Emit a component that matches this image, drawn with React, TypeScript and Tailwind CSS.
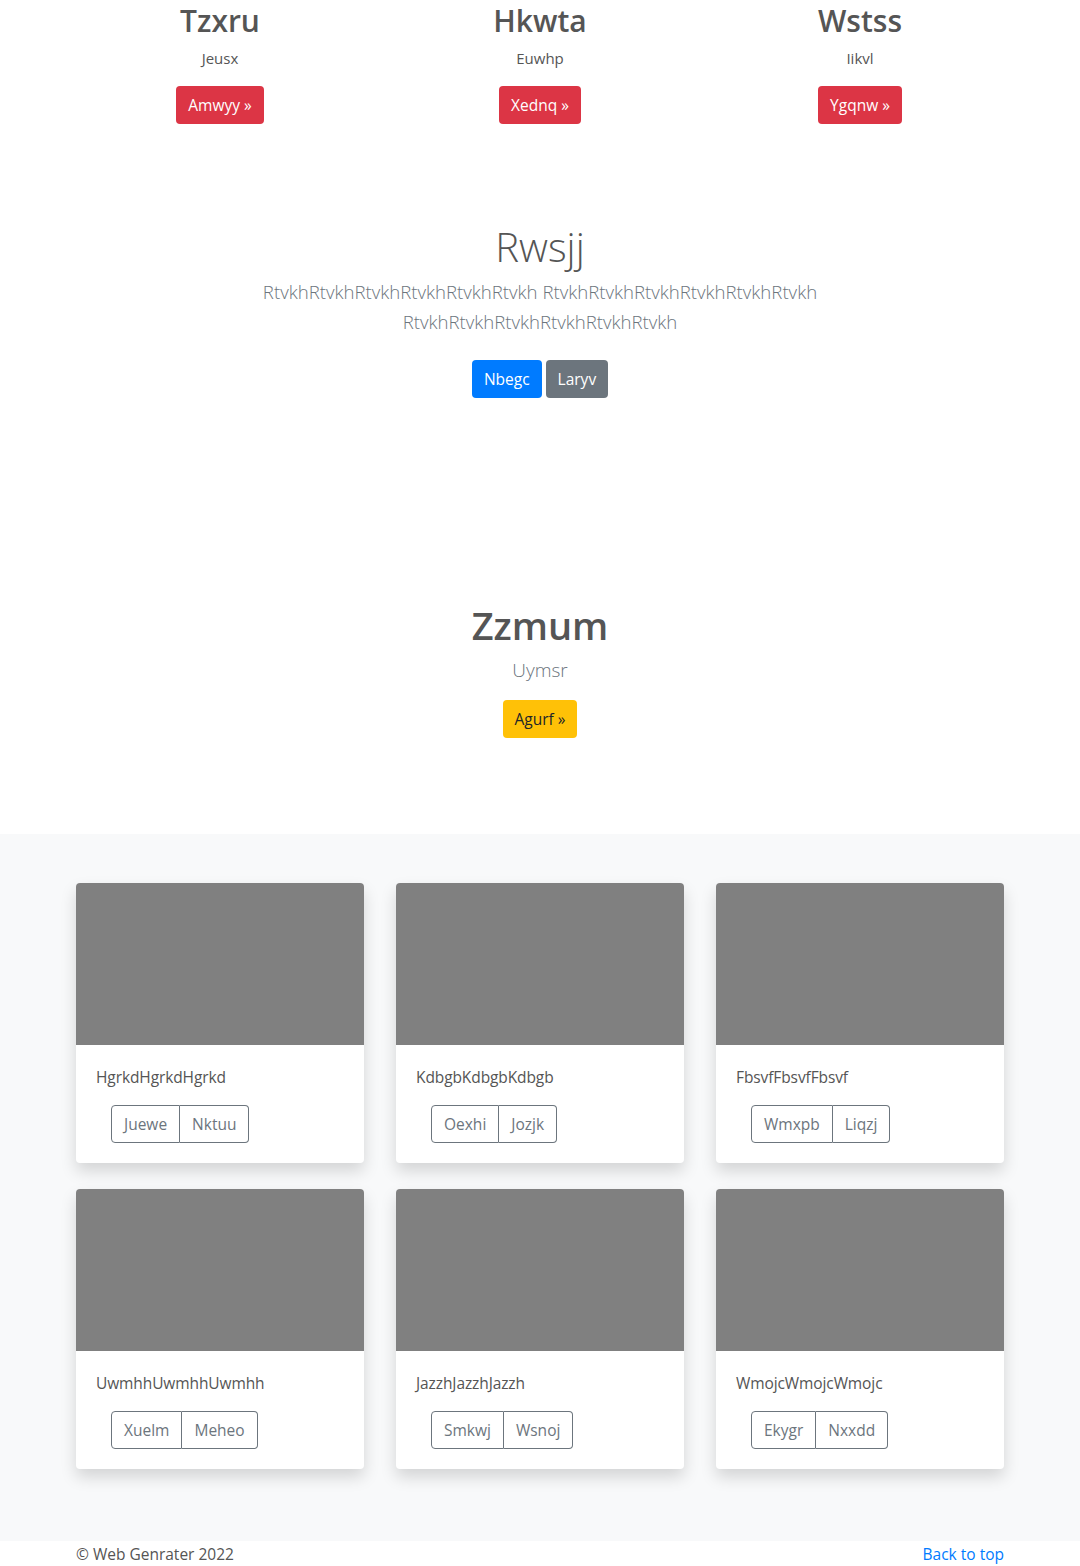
import React from "react";

const font = { fontFamily: "'Open Sans', 'Noto Sans', sans-serif" };

const features = [
  { title: "Tzxru", text: "Jeusx", btn: "Amwyy" },
  { title: "Hkwta", text: "Euwhp", btn: "Xednq" },
  { title: "Wstss", text: "Iikvl", btn: "Ygqnw" },
];

const cards = [
  { text: "HgrkdHgrkdHgrkd", a: "Juewe", b: "Nktuu" },
  { text: "KdbgbKdbgbKdbgb", a: "Oexhi", b: "Jozjk" },
  { text: "FbsvfFbsvfFbsvf", a: "Wmxpb", b: "Liqzj" },
  { text: "UwmhhUwmhhUwmhh", a: "Xuelm", b: "Meheo" },
  { text: "JazzhJazzhJazzh", a: "Smkwj", b: "Wsnoj" },
  { text: "WmojcWmojcWmojc", a: "Ekygr", b: "Nxxdd" },
];

function Card({ text, a, b }: { text: string; a: string; b: string }) {
  return (
    <div className="w-[288px] h-[280px] bg-white rounded-[4px] overflow-hidden shadow-[0_8px_16px_rgba(0,0,0,0.15)]">
      <div className="h-[162px] bg-[#808080]" />
      <div className="p-5">
        <p className="text-[15.5px] leading-6 text-[#555] mb-4 tracking-[-0.1px]">{text}</p>
        <div className="ml-[15px] inline-flex text-[15.5px] leading-6 text-[#6c757d]">
          <span className="border border-[#6c757d] rounded-l-[4px] px-3 py-[6px]">{a}</span>
          <span className="border border-l-0 border-[#6c757d] rounded-r-[4px] px-3 py-[6px]">{b}</span>
        </div>
      </div>
    </div>
  );
}

export default function App() {
  return (
    <div className="bg-white h-[1566px] overflow-hidden text-[#555]" style={font}>
      <div className="w-[960px] mx-auto grid grid-cols-3">
        {features.map((f) => (
          <div key={f.title} className="flex flex-col items-center">
            <h2 className="text-[30px] leading-[42px] font-semibold mb-1">{f.title}</h2>
            <p className="text-[15px] leading-6 mb-4">{f.text}</p>
            <span className="bg-[#dc3545] text-white text-[15.5px] leading-6 px-3 py-[7px] rounded-[4px]">
              {f.btn} »
            </span>
          </div>
        ))}
      </div>

      <div className="flex flex-col items-center mt-[99px]">
        <h1 className="text-[40px] leading-[48px] font-light mb-[6px]">Rwsjj</h1>
        <p className="text-center text-[18.6px] leading-[30px] font-light text-[#6c757d] whitespace-nowrap">
          RtvkhRtvkhRtvkhRtvkhRtvkhRtvkh RtvkhRtvkhRtvkhRtvkhRtvkhRtvkh
          <br />
          RtvkhRtvkhRtvkhRtvkhRtvkhRtvkh
        </p>
        <div className="flex gap-1 mt-[23px]">
          <span className="bg-[#007bff] text-white text-[15.5px] leading-6 px-3 py-[7px] rounded-[4px]">Nbegc</span>
          <span className="bg-[#6c757d] text-white text-[15.5px] leading-6 px-3 py-[7px] rounded-[4px]">Laryv</span>
        </div>
      </div>

      <div className="flex flex-col items-center mt-[203px]">
        <h1 className="text-[38px] leading-[48px] font-semibold mb-[6px]">Zzmum</h1>
        <p className="text-[19px] leading-[30px] font-light text-[#6c757d] mb-[15px]">Uymsr</p>
        <span className="bg-[#ffc107] text-[#212529] text-[15.5px] leading-6 px-3 py-[7px] rounded-[4px]">
          Agurf »
        </span>
      </div>

      <div className="mt-[96px] bg-[#f8f9fa] pt-[49px] pb-[72px]">
        <div className="w-[928px] mx-auto grid grid-cols-3 gap-x-8 gap-y-[26px]">
          {cards.map((c) => (
            <Card key={c.text} {...c} />
          ))}
        </div>
      </div>

      <footer className="w-[928px] mx-auto flex justify-between text-[15.5px] leading-6 pt-px pb-12">
        <span className="text-[#555]">© Web Genrater 2022</span>
        <span className="text-[#007bff]">Back to top</span>
      </footer>
    </div>
  );
}
